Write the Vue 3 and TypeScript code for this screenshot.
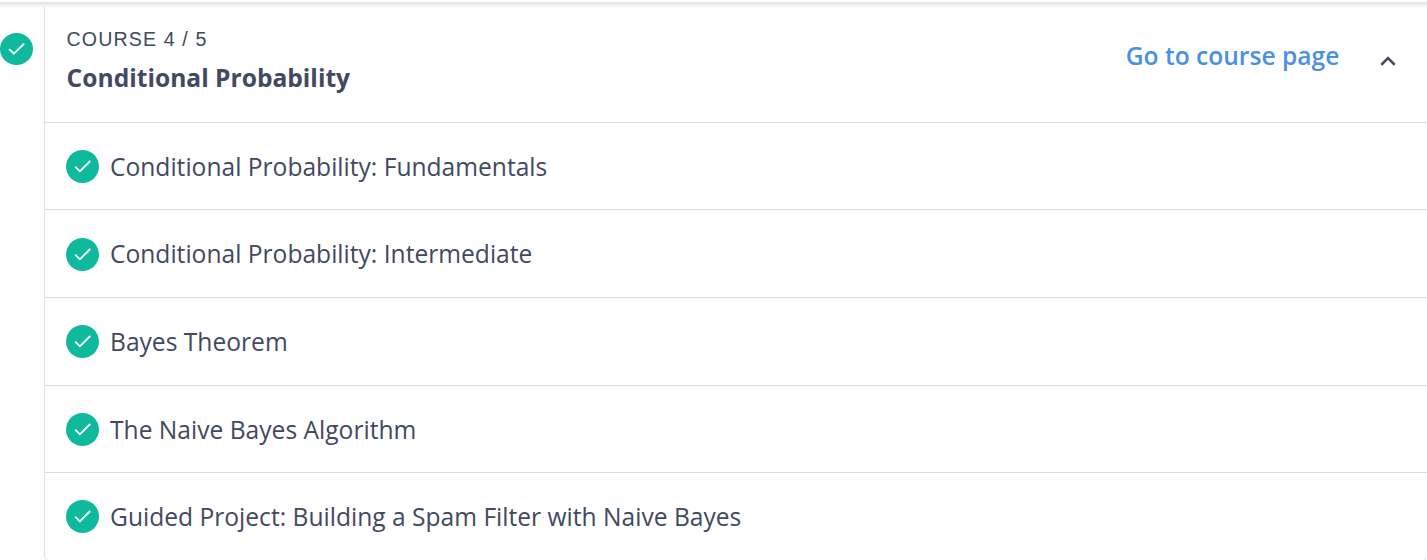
<script setup lang="ts">
interface Lesson {
  title: string
}

const lessons: Lesson[] = [
  { title: 'Conditional Probability: Fundamentals' },
  { title: 'Conditional Probability: Intermediate' },
  { title: 'Bayes Theorem' },
  { title: 'The Naive Bayes Algorithm' },
  { title: 'Guided Project: Building a Spam Filter with Naive Bayes' },
]
</script>

<template>
  <main class="page">
    <div class="top-shadow"></div>
    <aside class="status">
      <svg class="check" viewBox="0 0 33 33" preserveAspectRatio="none">
        <circle cx="16.5" cy="16.5" r="16.5" />
        <path d="M9.2 16.7 L13.9 21.3 L24.2 11" />
      </svg>
    </aside>
    <section class="card">
      <header class="head">
        <div class="heading">
          <span class="eyebrow">COURSE 4 / 5</span>
          <h2 class="title">Conditional Probability</h2>
        </div>
        <a class="link">Go to course page</a>
        <svg class="chevron" viewBox="0 0 16 10">
          <path d="M1.3 8.8 L8 2 L14.7 8.8" />
        </svg>
      </header>
      <ul class="lessons">
        <li v-for="lesson in lessons" :key="lesson.title" class="lesson">
          <svg class="check" viewBox="0 0 33 33">
            <circle cx="16.5" cy="16.5" r="16.5" />
            <path d="M9.2 16.7 L13.9 21.3 L24.2 11" />
          </svg>
          <span class="name">{{ lesson.title }}</span>
        </li>
      </ul>
    </section>
  </main>
</template>

<style>
body {
  margin: 0;
  overflow: hidden;
  background: #fff;
}
</style>

<style scoped>
.page {
  position: relative;
  display: flex;
  box-sizing: border-box;
  width: 1427px;
  height: 560px;
  padding-top: 2px;
  overflow: hidden;
  color: #424961;
  font-family: "Open Sans", "Noto Sans", sans-serif;
}
.top-shadow {
  position: absolute;
  top: 2px;
  left: 0;
  width: 100%;
  height: 6px;
  background: linear-gradient(#e6e6e6 0 2px, #f3f3f3 3px, rgba(255, 255, 255, 0) 6px);
}
.status {
  width: 44px;
  flex: none;
  padding-top: 31px;
}
.check {
  display: block;
  flex: none;
  width: 33px;
  height: 33px;
}
.status .check {
  height: 32px;
}
.check circle {
  fill: #0fba9c;
}
.check path {
  fill: none;
  stroke: #fff;
  stroke-width: 1.8;
}
.card {
  box-sizing: border-box;
  flex: none;
  width: 1384px;
  height: 559px;
  border: 1px solid #dfe0ea;
  border-radius: 6px;
}
.head {
  display: flex;
  box-sizing: border-box;
  height: 118.8px;
  padding: 0 31px 0 21.6px;
}
.heading {
  flex: 1;
  padding-top: 24px;
}
.eyebrow {
  display: block;
  font: 19.6px/24px "Liberation Sans", Arial, sans-serif;
  letter-spacing: 1.12px;
}
.title {
  margin: 10px 0 0;
  font-size: 24.6px;
  font-weight: 700;
  line-height: 34px;
}
.link {
  margin-top: 36px;
  color: #4a90e2;
  font-size: 24.6px;
  font-weight: 600;
  line-height: 34px;
}
.chevron {
  width: 16px;
  height: 10px;
  margin: 53px 0 0 40.6px;
}
.chevron path {
  fill: none;
  stroke: #424961;
  stroke-width: 2.6;
}
.lessons {
  margin: 0;
  padding: 0;
  list-style: none;
}
.lesson {
  display: flex;
  box-sizing: border-box;
  align-items: center;
  height: 87.6px;
  padding: 0.8px 0 0 21px;
  border-top: 1px solid #d9daea;
}
.name {
  margin-left: 11px;
  padding-top: 0.7px;
  font-size: 24.6px;
  line-height: 34px;
  white-space: nowrap;
}
</style>
